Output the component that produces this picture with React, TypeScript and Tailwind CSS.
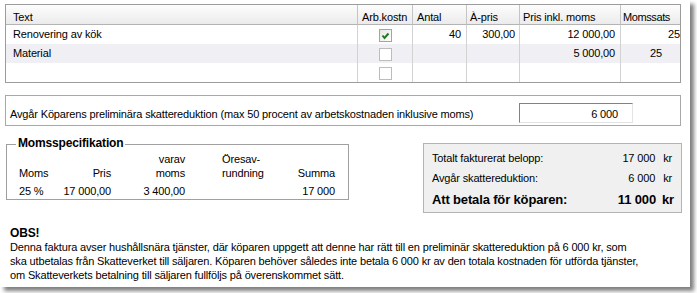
const rows = [
  { text: "Renovering av kök", checked: true, antal: "40", apris: "300,00", total: "12 000,00", moms: "25", alt: false },
  { text: "Material", checked: false, antal: "", apris: "", total: "5 000,00", moms: "25", alt: true },
  { text: "", checked: false, antal: "", apris: "", total: "", moms: "", alt: false },
];

function CheckBox({ checked }: { checked: boolean }) {
  return (
    <div
      className={
        checked
          ? "w-[13px] h-[13px] border border-[#a4a4a4] bg-linear-to-br from-[#e6e6e6] to-white flex items-center justify-center"
          : "w-[13px] h-[13px] border border-[#bcbcbc] bg-white"
      }
    >
      {checked && (
        <svg width="11" height="11" viewBox="0 0 11 11">
          <path d="M2.5 5.5 L4.5 8 L8.5 3.5" fill="none" stroke="#1f7a1f" strokeWidth="2" />
        </svg>
      )}
    </div>
  );
}

function InvoiceTable() {
  const head = "h-[20px] pt-[5px] border-b border-b-[#b4b4b4] bg-linear-to-b from-[#fdfdfd] to-[#ebebeb] whitespace-nowrap overflow-hidden";
  return (
    <div className="w-[676px] border border-[#9c9c9c] grid grid-cols-[352px_55px_54px_53px_101px_59px]">
      <div className={head + " pl-[7px] border-r border-r-[#c4c4c4]"}>Text</div>
      <div className={head + " pl-[4px] border-r border-r-[#c4c4c4]"}>Arb.kostn</div>
      <div className={head + " pl-[4px] border-r border-r-[#c4c4c4]"}>Antal</div>
      <div className={head + " pl-[3px] border-r border-r-[#c4c4c4]"}>À-pris</div>
      <div className={head + " pl-[3px] border-r border-r-[#c4c4c4]"}>Pris inkl. moms</div>
      <div className={head + " pl-[2px] tracking-[-0.4px]"}>Momssats</div>

      {rows.map((r, i) => {
        const cell = "h-[19px] pt-[2px] whitespace-nowrap " + (r.alt ? "bg-[#f0f0f4]" : "bg-white");
        return (
          <div key={i} className="contents">
            <div className={cell + " pl-[7px] border-r border-r-[#d2d2d2]"}>{r.text}</div>
            <div className={cell + " !pt-[4px] flex justify-center items-start border-r border-r-[#d2d2d2]"}>
              <CheckBox checked={r.checked} />
            </div>
            <div className={cell + " pr-[5px] text-right border-r border-r-[#d2d2d2]"}>{r.antal}</div>
            <div className={cell + " pr-[4px] text-right border-r border-r-[#d2d2d2]"}>{r.apris}</div>
            <div className={cell + " pr-[5px] text-right border-r border-r-[#d2d2d2]"}>{r.total}</div>
            <div className={cell + (i === 0 ? " text-right" : " pl-[29px]")}>{r.moms}</div>
          </div>
        );
      })}
    </div>
  );
}

function MomsSpec() {
  const grid = "grid grid-cols-[40px_52px_74px_100px_50px]";
  return (
    <div className="relative mt-[1px] ml-[1px] w-[343px] border border-[#a0a0a0] pt-[7px] pb-[1px] pl-[12px]">
      <span className="absolute left-[9px] top-[-9px] px-[2px] bg-white font-bold text-[12px] leading-[14px]">
        Momsspecifikation
      </span>
      <div className={grid}>
        <div />
        <div />
        <div className="text-right">varav</div>
        <div className="pl-[37px]">Öresav-</div>
        <div />
        <div>Moms</div>
        <div className="text-right">Pris</div>
        <div className="text-right">moms</div>
        <div className="pl-[37px]">rundning</div>
        <div className="text-right">Summa</div>
      </div>
      <div className={grid + " mt-[4px]"}>
        <div>25 %</div>
        <div className="text-right">17 000,00</div>
        <div className="text-right">3 400,00</div>
        <div />
        <div className="text-right">17 000</div>
      </div>
    </div>
  );
}

function Totals() {
  return (
    <div className="w-[259px] h-[70px] border border-[#b4b4b4] bg-[#f0f0f0] pt-[7px] pl-[8px] pr-[9px]">
      <div className="flex">
        <span className="flex-1">Totalt fakturerat belopp:</span>
        <span>17 000</span>
        <span className="ml-[8px]">kr</span>
      </div>
      <div className="flex mt-[6px]">
        <span className="flex-1">Avgår skattereduktion:</span>
        <span>6 000</span>
        <span className="ml-[8px]">kr</span>
      </div>
      <div className="flex mt-[7px] -mr-[2px] font-bold text-[13px] leading-[16px]">
        <span className="flex-1">Att betala för köparen:</span>
        <span>11 000</span>
        <span className="ml-[6px]">kr</span>
      </div>
    </div>
  );
}

export default function App() {
  return (
    <div className="w-[697px] h-[293px] bg-white overflow-hidden">
      <div className="w-[690px] h-[287px] bg-white shadow-[4px_4px_4px_rgba(0,0,0,0.5)] pl-[5px] pt-[4px] font-['Liberation_Sans',Arial,sans-serif] text-[11px] leading-[14px] tracking-[-0.15px] text-black">
        <InvoiceTable />

        <div className="mt-[12px] w-[676px] h-[31px] border border-[#a8a8a8] flex items-start pl-[4px]">
          <span className="flex-1 mt-[11px] whitespace-nowrap">
            Avgår Köparens preliminära skattereduktion (max 50 procent av arbetskostnaden inklusive moms)
          </span>
          <div className="mt-[7px] mr-[47px] w-[114px] h-[20px] pt-[3px] pr-[14px] text-right bg-white border border-t-[#828282] border-l-[#828282] border-b-[#e4e4e4] border-r-[#e4e4e4]">
            6 000
          </div>
        </div>

        <div className="mt-[17px] w-[677px] flex justify-between items-start">
          <MomsSpec />
          <Totals />
        </div>

        <div className="mt-[13px] pl-[5px] whitespace-nowrap">
          <div className="font-bold text-[12px]">OBS!</div>
          <div>
            Denna faktura avser hushållsnära tjänster, där köparen uppgett att denne har rätt till en preliminär skattereduktion på 6 000 kr, som
          </div>
          <div>
            ska utbetalas från Skatteverket till säljaren. Köparen behöver således inte betala 6 000 kr av den totala kostnaden för utförda tjänster,
          </div>
          <div>om Skatteverkets betalning till säljaren fullföljs på överenskommet sätt.</div>
        </div>
      </div>
    </div>
  );
}
